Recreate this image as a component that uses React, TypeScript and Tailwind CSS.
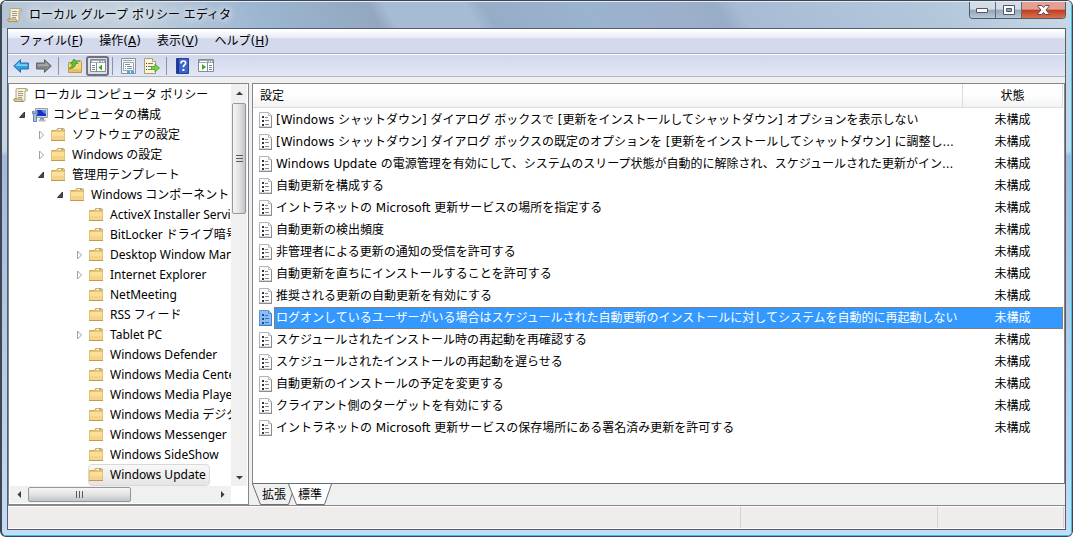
import type { ReactNode } from 'react';
import clsx from 'clsx';

type TreeNode = {
  label: string;
  level: number;
  state?: 'open' | 'closed';
  icon?: 'scroll' | 'computer';
  selected?: boolean;
};

const tree: TreeNode[] = [
  { label: 'ローカル コンピュータ ポリシー', level: 0, icon: 'scroll' },
  { label: 'コンピュータの構成', level: 1, state: 'open', icon: 'computer' },
  { label: 'ソフトウェアの設定', level: 2, state: 'closed' },
  { label: 'Windows の設定', level: 2, state: 'closed' },
  { label: '管理用テンプレート', level: 2, state: 'open' },
  { label: 'Windows コンポーネント', level: 3, state: 'open' },
  { label: 'ActiveX Installer Service', level: 4 },
  { label: 'BitLocker ドライブ暗号化', level: 4 },
  { label: 'Desktop Window Manager', level: 4, state: 'closed' },
  { label: 'Internet Explorer', level: 4, state: 'closed' },
  { label: 'NetMeeting', level: 4 },
  { label: 'RSS フィード', level: 4 },
  { label: 'Tablet PC', level: 4, state: 'closed' },
  { label: 'Windows Defender', level: 4 },
  { label: 'Windows Media Center', level: 4 },
  { label: 'Windows Media Player', level: 4 },
  { label: 'Windows Media デジタル', level: 4 },
  { label: 'Windows Messenger', level: 4 },
  { label: 'Windows SideShow', level: 4 },
  { label: 'Windows Update', level: 4, selected: true },
];

const settings = [
  '[Windows シャットダウン] ダイアログ ボックスで [更新をインストールしてシャットダウン] オプションを表示しない',
  '[Windows シャットダウン] ダイアログ ボックスの既定のオプションを [更新をインストールしてシャットダウン] に調整し...',
  'Windows Update の電源管理を有効にして、システムのスリープ状態が自動的に解除され、スケジュールされた更新がイン...',
  '自動更新を構成する',
  'イントラネットの Microsoft 更新サービスの場所を指定する',
  '自動更新の検出頻度',
  '非管理者による更新の通知の受信を許可する',
  '自動更新を直ちにインストールすることを許可する',
  '推奨される更新の自動更新を有効にする',
  'ログオンしているユーザーがいる場合はスケジュールされた自動更新のインストールに対してシステムを自動的に再起動しない',
  'スケジュールされたインストール時の再起動を再確認する',
  'スケジュールされたインストールの再起動を遅らせる',
  '自動更新のインストールの予定を変更する',
  'クライアント側のターゲットを有効にする',
  'イントラネットの Microsoft 更新サービスの保存場所にある署名済み更新を許可する',
];

const selectedSetting = 9;

const menus = [
  { label: 'ファイル', accessKey: 'F' },
  { label: '操作', accessKey: 'A' },
  { label: '表示', accessKey: 'V' },
  { label: 'ヘルプ', accessKey: 'H' },
];

const indents = ['pl-1', 'pl-1', 'pl-[23px]', 'pl-[42px]', 'pl-[61px]'];

function ScrollIcon() {
  return (
    <svg width="16" height="16" viewBox="0 0 16 16" className="shrink-0">
      <path d="M4 1.5h9.5q1.5.3 1 2.500h-2.500v8.500q0 2-2 2H2q-1.500-.5-1-2.500h2V3Q3 1.500 4 1.500z" fill="#f6efd6" stroke="#b5a77a" />
      <path d="M1 12h8q0 2.500 1.500 2.500H2Q.7 14 1 12z" fill="#e2d3a0" stroke="#94865a" strokeWidth=".8" />
      <path d="M12 4V2.500q1-1 2 0V4z" fill="#cdbb86" />
      <path d="M5 4.500h5M5 6.500h5M5 8.500h5M5 10.500h4" stroke="#9d9d96" />
    </svg>
  );
}

function ComputerIcon() {
  return (
    <svg width="16" height="16" viewBox="0 0 16 16" className="shrink-0">
      <path d="M3.500 1.500h12v9h-12z" fill="#d5d9df" stroke="#9ba1aa" />
      <path d="M5 3h9v6H5z" fill="#1432c8" />
      <path d="M9 3h5v4q-3-1-5-4z" fill="#5d8cf0" />
      <path d="M8 11h4v2H8z" fill="#8a9098" />
      <path d="M6.500 13.500h7" stroke="#b4b9c0" strokeWidth="2" />
      <path d="M.5 4.500q0 3 1 3.500v6.500h3V8q1-.5 1-3.500L4 4v2.500H2V4z" fill="#a9c4de" stroke="#5f82a6" />
    </svg>
  );
}

function FolderIcon() {
  return (
    <svg width="16" height="16" viewBox="0 0 16 16" className="shrink-0">
      <path d="M.5 3.500h5l1-2h6l1 1v11H.5z" fill="#e6c378" stroke="#d3aa58" />
      <path d="M7.500 2.500h3" stroke="#fff" />
      <path d="M10 2.500h2" stroke="#6ea5dc" />
      <path d="M.5 4.500h13v8.500H.5z" fill="#fbe09a" stroke="#e3c274" />
      <path d="M1 9h12v4H1z" fill="#f5d388" />
      <path d="M0 13.500h14" stroke="#c29a4c" />
    </svg>
  );
}

function SettingIcon({ selected }: { selected?: boolean }) {
  return (
    <svg width="14" height="16" viewBox="0 0 14 16" className="shrink-0">
      <path d="M.5.500h9l3 3v11.500H.5z" fill={selected ? '#8cbdf4' : '#fdfdfd'} stroke={selected ? '#4f97e4' : '#b4b4b4'} />
      <path d="M12.500 4v11.500M0 15.500h13" stroke={selected ? '#3f82cc' : '#8c8c8c'} />
      <path d="M9.500.500v3h3" fill="none" stroke={selected ? '#4f97e4' : '#bcbcbc'} />
      <path d="M3 4h2v2H3zM3 8h2v2H3zM3 12h2v2H3z" fill={selected ? '#174c91' : '#34343c'} />
      <path d="M6 5.500h3M6 8.500h4M6 12.500h4" stroke={selected ? '#3972b8' : '#84849a'} />
    </svg>
  );
}

function Expander({ state }: { state?: 'open' | 'closed' }) {
  return (
    <span className="flex w-[19px] shrink-0 pl-[6px]">
      {state && (
        <svg width="8" height="10" viewBox="0 0 8 10">
          {state === 'open' ? (
            <path d="M5.500 2v5.500H.5z" fill="#4a4a4a" stroke="#202020" strokeWidth=".8" />
          ) : (
            <path d="M1.500 1v8l4-4z" fill="#fff" stroke="#a0a0a0" />
          )}
        </svg>
      )}
    </span>
  );
}

function Arrow({ dir }: { dir: 'up' | 'down' | 'left' | 'right' }) {
  const paths = {
    up: 'M1 6 4.500 2.500 8 6z',
    down: 'M1 3 4.500 6.500 8 3z',
    left: 'M6 1 2.500 4.500 6 8z',
    right: 'M3 1 6.500 4.500 3 8z',
  };
  return (
    <svg width="9" height="9" viewBox="0 0 9 9">
      <path d={paths[dir]} fill="#3c3c3c" />
    </svg>
  );
}

function ToolButton({ label, pressed, children }: { label: string; pressed?: boolean; children: ReactNode }) {
  return (
    <button
      type="button"
      aria-label={label}
      className={clsx(
        'flex h-5 w-[23px] items-center justify-center',
        pressed && 'rounded-[3px] border-2 border-[#6d7180] bg-[#dcdfe9]'
      )}
    >
      {children}
    </button>
  );
}

function Separator() {
  return (
    <span className="w-2 pl-[3px]">
      <span className="block h-[18px] w-px bg-[#8c93a4]" />
    </span>
  );
}

function TitleBar() {
  return (
    <header className="-mx-[5px] flex h-[27px] items-start justify-between border-t border-[#e4edf5] bg-[linear-gradient(60deg,#b4c4d4_0%,#c3d1de_12%,#a3bad3_22%,#9bb5d0_25%,#93a8c0_35%,#a6bbd4_36.500%,#a6bbd4_44%,#96adc8_45.500%,#9ab3cf_55%,#9cafcb_64%,#98adc8_67%,#a7bbd5_69%,#b4c8dc_88%,#c9d8e6_100%)] px-[5px]">
      <div className="flex items-center gap-[6px] pt-[5px]">
        <ScrollIcon />
        <h1 className="leading-4 [text-shadow:0_0_6px_#fff,0_0_10px_#fff]">ローカル グループ ポリシー エディタ</h1>
      </div>
      <div className="flex h-[17px] overflow-hidden rounded-b-[4px] border border-t-0 border-[#4e5b6b]">
        <button type="button" aria-label="最小化" className="flex w-[26px] items-center justify-center border-r border-[#5d6b7c] bg-linear-to-b from-[#d3dde8] from-45% via-[#94a5b8] via-50% to-[#b9c8d8]">
          <svg width="13" height="6" viewBox="0 0 13 6">
            <path d="M.5 1.500h11v4H.5z" fill="#fff" stroke="#535666" />
          </svg>
        </button>
        <button type="button" aria-label="最大化" className="flex w-[26px] items-center justify-center border-r border-[#5d6b7c] bg-linear-to-b from-[#d3dde8] from-45% via-[#94a5b8] via-50% to-[#b9c8d8]">
          <svg width="12" height="10" viewBox="0 0 12 10">
            <path d="M.5.500h11v9H.5z" fill="#fff" stroke="#535666" />
            <path d="M3.500 3.500h5v3h-5z" fill="#8fa2b8" stroke="#535666" />
          </svg>
        </button>
        <button type="button" aria-label="閉じる" className="flex w-[43px] items-center justify-center bg-linear-to-b from-[#e3a093] from-45% via-[#c03a20] via-50% to-[#d9704f]">
          <svg width="13" height="10" viewBox="0 0 13 10">
            <path d="M1 .5h3.500l2 2 2-2H12v1L9 5l3 3.500v1H8.500l-2-2-2 2H1v-1L4 5 1 1.500z" fill="#fff" stroke="#5a4450" />
          </svg>
        </button>
      </div>
    </header>
  );
}

function MenuBar() {
  return (
    <nav className="flex h-[25px] items-center gap-4 border-b border-[#a9adbb] bg-linear-to-b from-white from-5% via-[#e6eaf6] via-38% to-[#d4d9ed] to-40% pl-[11px]">
      {menus.map((menu) => (
        <button key={menu.accessKey} type="button" className="leading-4">
          {menu.label}(<span className="underline">{menu.accessKey}</span>)
        </button>
      ))}
    </nav>
  );
}

function ToolBar() {
  return (
    <div role="toolbar" className="flex h-[23px] items-center border-t border-b border-t-white border-b-[#b0b9cf] bg-linear-to-b from-[#d2d8ec] to-[#e2e7f5] pl-px">
      <ToolButton label="戻る">
        <svg width="16" height="14" viewBox="0 0 16 14">
          <path d="M.7 7 7.500.7V4H15.400v6H7.500v3.300z" fill="#2f9fe4" stroke="#2c6da8" />
          <path d="M2.500 7 6.500 3v2.200h7.800V7z" fill="#7fd0f8" />
        </svg>
      </ToolButton>
      <ToolButton label="進む">
        <svg width="16" height="14" viewBox="0 0 16 14">
          <path d="M15.300 7 8.500.7V4H.6v6h7.900v3.300z" fill="#868686" stroke="#606060" />
          <path d="M13.500 7 9.500 3v2.200H1.700V7z" fill="#a9a9a9" />
        </svg>
      </ToolButton>
      <Separator />
      <ToolButton label="上へ">
        <svg width="16" height="16" viewBox="0 0 16 16">
          <path d="M1.500 4.500h6l1-2h5l1 1v11h-13z" fill="#f7d680" stroke="#c09a48" />
          <path d="M2 11h12v3H2z" fill="#eabf62" />
          <path d="M10 3.500h3" stroke="#6aa2d8" />
          <path d="M2 10.500q3-1 3.500-4.500H3.500L7 1l4 4.500H8.700Q8 11 2 10.500z" fill="#5cc232" stroke="#3b8e20" strokeWidth=".7" />
        </svg>
      </ToolButton>
      <ToolButton label="コンソール ツリーの表示" pressed>
        <svg width="16" height="13" viewBox="0 0 16 13" className="shrink-0">
          <path d="M.5.500h15v12H.5z" fill="#fff" stroke="#858b96" />
          <path d="M1 1h14v3H1z" fill="#a3a8b2" />
          <path d="M2 2.500h7M11 2.500h1M13 2.500h1" stroke="#fff" />
          <path d="M6.500 4v9" stroke="#858b96" />
          <path d="M2 6.500h3M2 8.500h3M2 10.500h3" stroke="#7b8190" />
          <path d="M12 5.500v6L8.500 8.500z" fill="#3aa82a" />
        </svg>
      </ToolButton>
      <Separator />
      <ToolButton label="プロパティ">
        <svg width="15" height="16" viewBox="0 0 15 16">
          <path d="M.5.500h14v15H.5z" fill="#f4f6fa" stroke="#8b919c" />
          <path d="M2 2.500h9M12 2.500h1" stroke="#9da3ae" />
          <path d="M2.500 4.500h10v8h-10z" fill="#fff" stroke="#9aa3b2" />
          <path d="M4 6.500h5M4 8.500h1M6 8.500h5M4 10.500h1M6 10.500h5" stroke="#7f8ba0" />
          <path d="M6 14h3M10 14h3" stroke="#34b4e6" strokeWidth="2" />
        </svg>
      </ToolButton>
      <ToolButton label="一覧のエクスポート">
        <svg width="16" height="16" viewBox="0 0 16 16">
          <path d="M.5.500h8l3 3v12H.5z" fill="#fdf4d4" stroke="#a79f84" />
          <path d="M8.500.500v3h3" fill="#fff" stroke="#a79f84" />
          <path d="M2 5.500h1M2 8.500h1M2 11.500h1" stroke="#444" />
          <path d="M4 5.500h5M4 8.500h4M4 11.500h4" stroke="#857e74" />
          <path d="M7.500 8.500H11V6l4.500 4-4.500 4v-2.500H7.500z" fill="#76d048" stroke="#4a9e28" strokeWidth=".8" />
        </svg>
      </ToolButton>
      <Separator />
      <ToolButton label="ヘルプ">
        <svg width="13" height="16" viewBox="0 0 13 16">
          <path d="M.5.500h12v15H.5z" fill="#3c62cc" stroke="#23409a" />
          <path d="M1 1h2v14H1z" fill="#1d3892" />
          <path d="M5 5.500q0-2.500 2.300-2.500t2.300 2q0 1.300-1.200 2-1.100.8-1.100 2.200" fill="none" stroke="#fff" strokeWidth="1.700" />
          <path d="M6.400 11h2v2h-2z" fill="#fff" />
        </svg>
      </ToolButton>
      <ToolButton label="操作ウィンドウの表示">
        <svg width="16" height="13" viewBox="0 0 16 13">
          <path d="M.5.500h15v12H.5z" fill="#fff" stroke="#858b96" />
          <path d="M1 1h14v3H1z" fill="#a3a8b2" />
          <path d="M2 2.500h7M11 2.500h1M13 2.500h1" stroke="#fff" />
          <path d="M9.500 4v9" stroke="#858b96" />
          <path d="M11 6.500h3M11 8.500h3M11 10.500h3" stroke="#7b8190" />
          <path d="M4 5v6l4-3z" fill="#3aa82a" />
        </svg>
      </ToolButton>
    </div>
  );
}

function TreePane() {
  return (
    <aside className="flex w-[241px] shrink-0 flex-col border border-[#82878f] bg-white p-px pt-0 font-['Noto_Sans','Noto_Sans_CJK_JP',sans-serif]">
      <div className="flex min-h-0 flex-1">
        <ul role="tree" className="min-w-0 flex-1 overflow-hidden pt-px">
          {tree.map((node) => (
            <li key={node.label} role="treeitem" aria-selected={!!node.selected} className={clsx('-ml-px flex h-5 items-center', indents[node.level])}>
              {node.level > 0 && <Expander state={node.state} />}
              <span
                className={clsx(
                  'flex h-5 items-center gap-1 whitespace-nowrap pr-[3px]',
                  node.selected && 'rounded-[3px] bg-linear-to-b from-[#f8f8f8] to-[#e5e5e5] outline outline-[#d9d9d9]'
                )}
              >
                {node.icon === 'scroll' ? <ScrollIcon /> : node.icon === 'computer' ? <ComputerIcon /> : <FolderIcon />}
                <span className="pl-px leading-4">{node.label}</span>
              </span>
            </li>
          ))}
        </ul>
        <div className="flex w-4 flex-col items-center bg-[#f0f0f0]">
          <span className="flex h-[19px] items-center">
            <Arrow dir="up" />
          </span>
          <div className="flex h-[111px] w-[14px] flex-col items-center justify-center gap-[2px] rounded-[2px] border border-[#979797] bg-linear-to-r from-[#f5f5f5] via-[#e3e3e5] to-[#c4c4c9]">
            <span className="h-px w-[7px] bg-[#5a5a5a]" />
            <span className="h-px w-[7px] bg-[#5a5a5a]" />
            <span className="h-px w-[7px] bg-[#5a5a5a]" />
          </div>
          <span className="mt-auto flex h-[17px] items-center">
            <Arrow dir="down" />
          </span>
        </div>
      </div>
      <div className="mr-4 flex h-[17px] items-center bg-[#f0f0f0]">
        <span className="flex w-[18px] justify-center">
          <Arrow dir="left" />
        </span>
        <div className="flex h-[15px] w-[103px] items-center justify-center gap-[2px] rounded-[2px] border border-[#979797] bg-linear-to-b from-[#f5f5f5] via-[#e3e3e5] to-[#c4c4c9]">
          <span className="h-[7px] w-px bg-[#5a5a5a]" />
          <span className="h-[7px] w-px bg-[#5a5a5a]" />
          <span className="h-[7px] w-px bg-[#5a5a5a]" />
        </div>
        <span className="ml-auto flex w-[18px] justify-center">
          <Arrow dir="right" />
        </span>
      </div>
    </aside>
  );
}

function SettingsTable() {
  return (
    <table className="w-full table-fixed border-separate border-spacing-0">
      <thead>
        <tr className="h-6 bg-linear-to-b from-white from-40% to-[#f1f2f4]">
          <th className="border-r border-b border-[#dcdde0] pl-[7px] text-left font-normal">設定</th>
          <th className="w-[100px] border-r border-b border-[#dcdde0] text-center font-normal">状態</th>
        </tr>
        <tr aria-hidden="true" className="h-px">
          <td colSpan={2} />
        </tr>
      </thead>
      <tbody>
        {settings.map((name, i) => {
          const selected = i === selectedSetting;
          return (
            <tr key={name} aria-selected={selected} className="h-[22px]">
              <td className="p-0 pl-[6px]">
                <div className="flex items-center gap-px">
                  <SettingIcon selected={selected} />
                  <span
                    className={clsx(
                      'flex h-[22px] min-w-0 flex-1 items-center border border-r-0 pl-px',
                      selected ? 'border-dotted border-[#cc6600] bg-[#3399ff] text-white' : 'border-transparent'
                    )}
                  >
                    <span className="overflow-hidden leading-4 whitespace-nowrap">{name}</span>
                  </span>
                </div>
              </td>
              <td
                className={clsx(
                  'border border-l-0 p-0 text-center leading-4',
                  selected ? 'border-dotted border-[#cc6600] bg-[#3399ff] text-white' : 'border-transparent'
                )}
              >
                未構成
              </td>
            </tr>
          );
        })}
      </tbody>
    </table>
  );
}

function ViewTab({ label, active }: { label: string; active?: boolean }) {
  return (
    <button type="button" role="tab" aria-selected={!!active} className={clsx('relative h-[21px] w-11', active && '-ml-2')}>
      <svg width="44" height="21" viewBox="0 0 44 21" className="absolute inset-0">
        <path d="M.5 0 8.500 20.500h28L43.500 0" fill={active ? '#fff' : '#f0f0f0'} stroke="#6d6d74" />
      </svg>
      <span className="relative leading-4">{label}</span>
    </button>
  );
}

export default function App() {
  return (
    <div className="flex h-screen min-h-[300px] flex-col overflow-hidden rounded-[6px] border border-l-2 border-[#3d4652] bg-linear-to-b from-[#c6d5e3] from-28% via-[#a3b9d6] via-29% to-[#c6dcf5] font-['DejaVu_Sans','Noto_Sans_CJK_JP',sans-serif] text-[12px] text-black">
      <div className="flex min-h-0 flex-1 flex-col border-r border-b border-[#2cc4ea] pr-[5px] pb-[5px] pl-[5px]">
        <TitleBar />
        <div className="flex min-h-0 flex-1 flex-col border border-[#535f70] bg-[#f0f0f0]">
          <MenuBar />
          <ToolBar />
          <main className="mt-[6px] flex min-h-0 flex-1 gap-[3px]">
            <TreePane />
            <section className="flex min-w-0 flex-1 flex-col">
              <div className="min-h-0 flex-1 overflow-hidden border border-[#82878f] border-b-[#696c74] bg-white pr-px">
                <SettingsTable />
              </div>
              <div role="tablist" className="flex h-[21px]">
                <ViewTab label="拡張" />
                <ViewTab label="標準" active />
              </div>
            </section>
          </main>
          <footer className="flex h-6 border-y border-t-[#8a8a8a] border-b-white bg-[#f0eceb] pr-px">
            <span className="flex-1 border-t border-r border-t-white border-r-[#d4d2d2]" />
            <span className="w-[197px] border-t border-r border-t-white border-r-[#d4d2d2]" />
            <span className="w-[126px] border-t border-r border-t-white border-r-[#d4d2d2]" />
          </footer>
        </div>
      </div>
    </div>
  );
}
